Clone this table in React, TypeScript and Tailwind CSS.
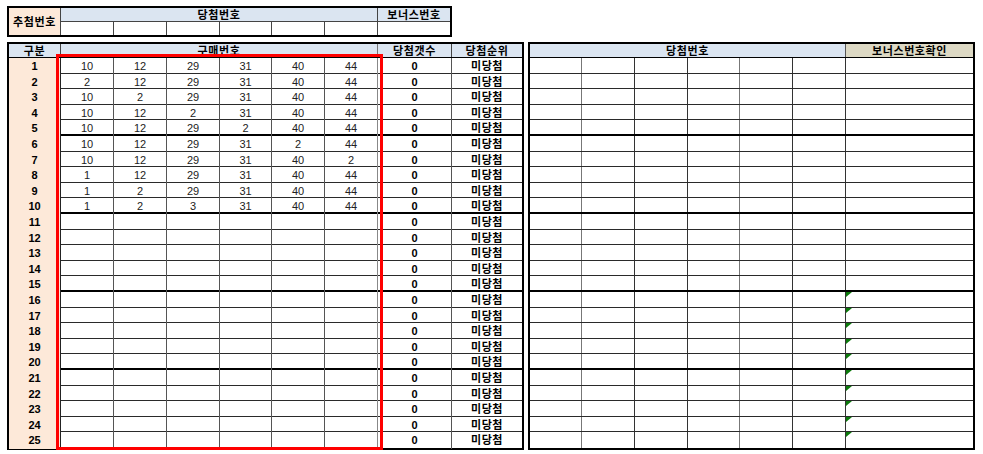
const font = "font-['Liberation_Sans','Noto_Sans_CJK_KR',sans-serif]";

const leftCols = "grid grid-cols-[52px_53px_53px_53px_52px_53px_53px_74px_70px]";
const topCols = "grid grid-cols-[52px_53px_53px_53px_52px_53px_53px_72px]";
const rightCols = "grid grid-cols-[52px_53px_53px_52px_53px_53px_127px]";

const rowH = ["h-[16px]", "h-[15px]", "h-[16px]", "h-[15px]", "h-[16px]"];

const picks: number[][] = [
  [10, 12, 29, 31, 40, 44],
  [2, 12, 29, 31, 40, 44],
  [10, 2, 29, 31, 40, 44],
  [10, 12, 2, 31, 40, 44],
  [10, 12, 29, 2, 40, 44],
  [10, 12, 29, 31, 2, 44],
  [10, 12, 29, 31, 40, 2],
  [1, 12, 29, 31, 40, 44],
  [1, 2, 29, 31, 40, 44],
  [1, 2, 3, 31, 40, 44],
];

const rows = Array.from({ length: 25 }, (_, i) => i);

// korean labels: bold 11px with a little tracking
const kLabel = "flex items-center justify-center leading-[11px] text-[11px] font-bold tracking-[0.6px]";
const kHead = `${kLabel} pt-[1px]`;

function rowClass(i: number) {
  const h = rowH[i % 5];
  if (i === 24) return h;
  if (i % 5 === 4) return `${h} border-b-2 border-black`;
  return `${h} border-b border-[#2a2a2a]`;
}

function Flag() {
  return (
    <svg className="absolute left-0 top-0" width="6" height="5" viewBox="0 0 6 5">
      <polygon points="0,0 6,0 0,5" fill="#0b7a0b" />
    </svg>
  );
}

export default function App() {
  return (
    <div className={`relative h-[454px] w-[983px] bg-white text-black ${font}`}>
      <div className="flex flex-col gap-[5px] pl-[7px] pt-[6px]">
        {/* ─── 추첨번호 ─── */}
        <div className="w-[445px] border-2 border-black">
          <div className={`${topCols} grid-rows-[14px_13px]`}>
            <div className={`${kHead} row-span-2 border-r border-[#444] bg-[#fde9d9]`}>추첨번호</div>
            <div className={`${kHead} col-span-6 border-b border-r border-[#444] bg-[#dbe5f1]`}>당첨번호</div>
            <div className={`${kHead} border-b border-[#444] bg-[#dbe5f1]`}>보너스번호</div>
            {[0, 1, 2, 3, 4, 5].map((c) => (
              <div key={c} className="border-r border-[#444]" />
            ))}
            <div />
          </div>
        </div>

        <div className="flex gap-[4px]">
          {/* ─── 구매번호 ─── */}
          <div className="w-[517px] border-2 border-black">
            <div className={`${leftCols} h-[14px] border-b border-black bg-[#dbe5f1]`}>
              <div className={`${kHead} border-r border-[#444]`}>구분</div>
              <div className={`${kHead} col-span-6 border-r border-[#777]`}>구매번호</div>
              <div className={`${kHead} border-r border-[#444]`}>당첨갯수</div>
              <div className={kHead}>당첨순위</div>
            </div>
            {rows.map((i) => (
              <div key={i} className={`${leftCols} ${rowClass(i)}`}>
                <div className="flex items-center justify-center border-r border-[#222] bg-[#fde9d9] text-[11px] font-bold">
                  {i + 1}
                </div>
                {[0, 1, 2, 3, 4, 5].map((c) => (
                  <div
                    key={c}
                    className={`flex items-center justify-center border-r text-[11px] text-[#222] ${c === 5 ? "border-[#888]" : "border-[#555]"}`}
                  >
                    {picks[i] ? picks[i][c] : ""}
                  </div>
                ))}
                <div className="flex items-center justify-center border-r border-[#555] text-[11px] font-bold">0</div>
                <div className={kLabel}>미당첨</div>
              </div>
            ))}
          </div>

          {/* ─── 당첨번호 확인 ─── */}
          <div className="w-[447px] border-2 border-black">
            <div className={`${rightCols} h-[14px] border-b border-black`}>
              <div className={`${kHead} col-span-6 border-r border-[#555] bg-[#dbe5f1]`}>당첨번호</div>
              <div className={`${kHead} bg-[#ddd9c4]`}>보너스번호확인</div>
            </div>
            {rows.map((i) => (
              <div key={i} className={`${rightCols} ${rowClass(i)}`}>
                {[0, 1, 2, 3, 4, 5].map((c) => (
                  <div key={c} className={`border-r ${c % 3 === 0 ? "border-[#777]" : "border-[#333]"}`} />
                ))}
                <div className="relative">{i >= 15 && <Flag />}</div>
              </div>
            ))}
          </div>
        </div>
      </div>

      {/* highlight box */}
      <div className="pointer-events-none absolute left-[56px] top-[54px] h-[396px] w-[327px] border-[3px] border-[#ff0000]" />
    </div>
  );
}
